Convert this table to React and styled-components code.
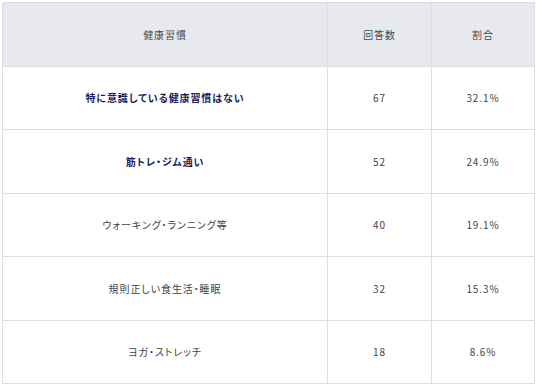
import React from "react";
import styled, { createGlobalStyle } from "styled-components";

const Global = createGlobalStyle`
  html, body { margin: 0; padding: 0; background: #ffffff; }
  body { font-family: "Noto Sans CJK JP", "Noto Sans", sans-serif; }
`;

const Wrap = styled.div`
  padding: 2px;
`;

const Table = styled.table`
  width: 532px;
  border-collapse: collapse;
  table-layout: fixed;
  border: 1px solid #dcdde2;
`;

const Col = styled.col`
  width: ${(p) => p.$w}px;
`;

const HeadCell = styled.th`
  height: 62.5px;
  background: #e8e9ee;
  color: #4a4a4a;
  font-weight: 400;
  font-size: 10px;
  letter-spacing: 0.09em;
  font-feature-settings: "palt";
  text-align: center;
  vertical-align: middle;
  border: 1px solid #dcdde2;
  padding: 0;
`;

const Cell = styled.td`
  height: 62.5px;
  background: #ffffff;
  color: ${(p) => (p.$strong ? "#1e1f5e" : "#444444")};
  font-weight: ${(p) => (p.$strong ? 700 : 400)};
  font-size: 10px;
  letter-spacing: 0.09em;
  font-feature-settings: "palt";
  text-align: center;
  vertical-align: middle;
  border: 1px solid #dcdde2;
  padding: 0;
`;

const rows = [
  { name: "特に意識している健康習慣はない", count: 67, pct: "32.1%", strong: true },
  { name: "筋トレ・ジム通い", count: 52, pct: "24.9%", strong: true },
  { name: "ウォーキング・ランニング等", count: 40, pct: "19.1%" },
  { name: "規則正しい食生活・睡眠", count: 32, pct: "15.3%" },
  { name: "ヨガ・ストレッチ", count: 18, pct: "8.6%" },
];

export default function App() {
  return (
    <Wrap>
      <Global />
      <Table>
        <colgroup>
          <Col $w={325} />
          <Col $w={104} />
          <Col $w={103} />
        </colgroup>
        <thead>
          <tr>
            <HeadCell>健康習慣</HeadCell>
            <HeadCell>回答数</HeadCell>
            <HeadCell>割合</HeadCell>
          </tr>
        </thead>
        <tbody>
          {rows.map((r) => (
            <tr key={r.name}>
              <Cell $strong={r.strong}>{r.name}</Cell>
              <Cell>{r.count}</Cell>
              <Cell>{r.pct}</Cell>
            </tr>
          ))}
        </tbody>
      </Table>
    </Wrap>
  );
}
